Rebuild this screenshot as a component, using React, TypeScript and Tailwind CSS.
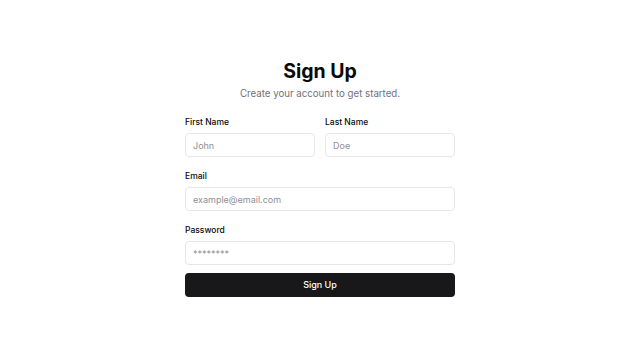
export default function App() {
  return (
    <div
      className="flex min-h-[357px] justify-center bg-white pt-[58px]"
      style={{ fontFamily: 'Inter, "Noto Sans", sans-serif' }}
    >
      <div className="w-[270px]">
        <h1 className="text-center text-[19.5px] font-bold leading-[26px] text-[#0a0a0a]">Sign Up</h1>
        <p className="mt-[3px] text-center text-[9.7px] leading-[14px] text-[#71717a]">
          Create your account to get started.
        </p>

        <form className="mt-[15px] flex flex-col" onSubmit={(e) => e.preventDefault()}>
          <div className="grid grid-cols-2 gap-[10px]">
            <Field label="First Name" placeholder="John" />
            <Field label="Last Name" placeholder="Doe" />
          </div>
          <div className="mt-[13px]">
            <Field label="Email" placeholder="example@email.com" />
          </div>
          <div className="mt-[13px]">
            <Field label="Password" placeholder="********" />
          </div>
          <button
            type="submit"
            className="mt-[8px] h-[24px] w-full rounded-[4px] bg-[#18181b] text-[9px] font-medium text-white"
          >
            Sign Up
          </button>
        </form>
      </div>
    </div>
  )
}

function Field({ label, placeholder }: { label: string; placeholder: string }) {
  return (
    <label className="flex flex-col">
      <span className="text-[8.5px] font-medium leading-[12px] text-[#0a0a0a]">{label}</span>
      <input
        type="text"
        placeholder={placeholder}
        className="mt-[5px] h-[24px] w-full rounded-[4px] border border-[#e7e7ea] px-[7px] text-[9px] text-[#0a0a0a] placeholder:text-[#8e8e96] outline-none"
      />
    </label>
  )
}
